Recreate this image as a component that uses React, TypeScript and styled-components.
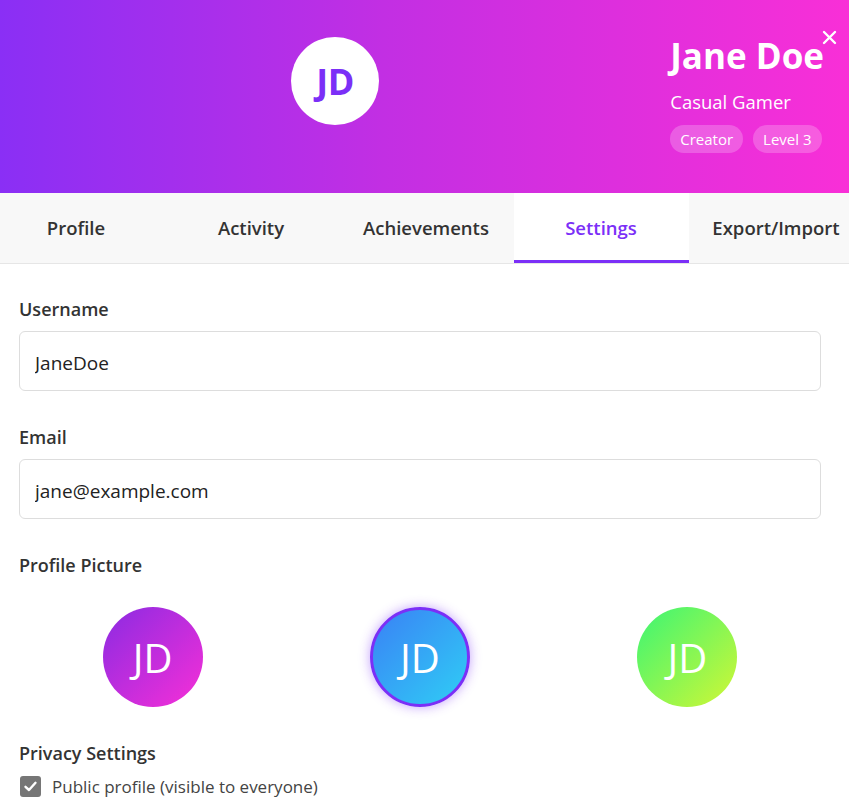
import React, { useState } from 'react'
import styled, { createGlobalStyle } from 'styled-components'

const GlobalStyle = createGlobalStyle`
  * { box-sizing: border-box; }
  html, body {
    margin: 0;
    padding: 0;
    background: #ffffff;
    font-family: "Open Sans", "Noto Sans", sans-serif;
    color: #333333;
    overflow: hidden;
  }
`

const avatarOptions = [
  { id: 'purple', from: '#8a2be2', to: '#f72fd7' },
  { id: 'blue', from: '#3a7ff5', to: '#2fd0f5' },
  { id: 'green', from: '#3af575', to: '#d2f734' },
]

const tabs = ['Profile', 'Activity', 'Achievements', 'Settings', 'Export/Import']

export default function App() {
  const [activeTab, setActiveTab] = useState('Settings')
  const [selected, setSelected] = useState('blue')
  const [isPublic, setIsPublic] = useState(true)

  return (
    <>
      <GlobalStyle />
      <Modal>
        <Header>
          <AvatarSlot>
            <HeaderAvatar>JD</HeaderAvatar>
          </AvatarSlot>
          <Info>
            <Name>Jane Doe</Name>
            <Role>Casual Gamer</Role>
            <Badges>
              <Badge>Creator</Badge>
              <Badge>Level 3</Badge>
            </Badges>
          </Info>
          <CloseButton aria-label="Close">
            <svg width="15" height="15" viewBox="0 0 15 15">
              <path d="M2 2 L13 13 M13 2 L2 13" stroke="#ffffff" strokeWidth="2.4" strokeLinecap="round" />
            </svg>
          </CloseButton>
        </Header>

        <TabBar>
          {tabs.map((t) => (
            <Tab key={t} $active={t === activeTab} onClick={() => setActiveTab(t)}>
              {t}
            </Tab>
          ))}
        </TabBar>

        <Content>
          <Field>
            <Label>Username</Label>
            <TextInput type="text" defaultValue="JaneDoe" />
          </Field>
          <Field>
            <Label>Email</Label>
            <TextInput type="email" defaultValue="jane@example.com" />
          </Field>
          <Field>
            <Label>Profile Picture</Label>
            <AvatarGrid>
              {avatarOptions.map((a) => (
                <AvatarChoice
                  key={a.id}
                  $from={a.from}
                  $to={a.to}
                  $selected={a.id === selected}
                  onClick={() => setSelected(a.id)}
                >
                  JD
                </AvatarChoice>
              ))}
            </AvatarGrid>
          </Field>
          <Field>
            <Label>Privacy Settings</Label>
            <CheckRow onClick={() => setIsPublic(!isPublic)}>
              <CheckBox $checked={isPublic}>
                {isPublic && (
                  <svg width="15" height="15" viewBox="0 0 15 15">
                    <path d="M2.5 7.8 L6 11 L12.5 3.8" stroke="#ffffff" strokeWidth="2.4" fill="none" strokeLinecap="round" strokeLinejoin="round" />
                  </svg>
                )}
              </CheckBox>
              <CheckText>Public profile (visible to everyone)</CheckText>
            </CheckRow>
          </Field>
        </Content>
      </Modal>
    </>
  )
}

const Modal = styled.div`
  width: 849px;
  min-height: 811px;
  background: #ffffff;
  display: flex;
  flex-direction: column;
`

const Header = styled.div`
  position: relative;
  height: 193px;
  display: grid;
  grid-template-columns: 1fr auto;
  align-items: start;
  padding: 35px 25px 0 0;
  background: linear-gradient(90deg, #8a2ff5 0%, #c22fe3 45%, #f92fd7 100%);
  color: #ffffff;
`

const AvatarSlot = styled.div`
  display: flex;
  justify-content: center;
  padding-top: 2px;
`

const HeaderAvatar = styled.div`
  width: 88px;
  height: 88px;
  border-radius: 50%;
  background: #ffffff;
  color: #7b2ff7;
  display: flex;
  align-items: center;
  justify-content: center;
  font-size: 36px;
  font-weight: 700;
  letter-spacing: -0.5px;
`

const Info = styled.div`
  display: flex;
  flex-direction: column;
  align-items: flex-start;
`

const Name = styled.h1`
  margin: 0;
  font-size: 35px;
  line-height: 42px;
  font-weight: 700;
`

const Role = styled.div`
  margin-top: 12px;
  font-size: 18.5px;
  line-height: 26px;
`

const Badges = styled.div`
  display: flex;
  gap: 10px;
  margin-top: 10px;
`

const Badge = styled.span`
  height: 28px;
  padding: 0 10px;
  border-radius: 14px;
  background: rgba(255, 255, 255, 0.22);
  font-size: 15px;
  line-height: 28px;
`

const CloseButton = styled.button`
  position: absolute;
  top: 28px;
  right: 11px;
  width: 18px;
  height: 18px;
  padding: 0;
  border: none;
  background: none;
  cursor: pointer;
  display: flex;
  align-items: center;
  justify-content: center;
`

const TabBar = styled.div`
  display: flex;
  height: 71px;
  background: #f8f8f8;
  border-bottom: 1px solid #e6e6e6;
  overflow: hidden;
`

const Tab = styled.button<{ $active?: boolean }>`
  flex: 0 0 175px;
  height: 70px;
  border: none;
  border-bottom: 3px solid ${(p) => (p.$active ? '#7b2ff7' : 'transparent')};
  background: ${(p) => (p.$active ? '#ffffff' : 'transparent')};
  color: ${(p) => (p.$active ? '#7b2ff7' : '#333333')};
  font-family: inherit;
  font-size: 18.5px;
  font-weight: 600;
  padding: 1px 0 0;
  cursor: pointer;

  &:first-child {
    margin-left: -11.5px;
  }
`

const Content = styled.div`
  padding: 33px 28px 0 19px;
  display: flex;
  flex-direction: column;
  gap: 34px;
`

const Field = styled.div`
  display: flex;
  flex-direction: column;
`

const Label = styled.label`
  font-size: 18px;
  line-height: 24px;
  font-weight: 600;
  color: #333333;
  margin-bottom: 10px;
`

const TextInput = styled.input`
  height: 60px;
  width: 100%;
  padding: 3px 15px 0;
  border: 1px solid #dddddd;
  border-radius: 6px;
  font-family: inherit;
  font-size: 19px;
  color: #222222;
  outline: none;
`

const AvatarGrid = styled.div`
  display: grid;
  grid-template-columns: repeat(3, 1fr);
  padding: 20px 0 0;
`

const AvatarChoice = styled.div<{ $from: string; $to: string; $selected?: boolean }>`
  justify-self: center;
  width: 100px;
  height: 100px;
  border-radius: 50%;
  border: 3px solid ${(p) => (p.$selected ? '#7b2ff7' : 'transparent')};
  background: linear-gradient(135deg, ${(p) => p.$from}, ${(p) => p.$to}) border-box;
  box-shadow: ${(p) => (p.$selected ? '0 0 12px rgba(123, 47, 247, 0.45)' : 'none')};
  color: #ffffff;
  font-size: 40px;
  font-weight: 400;
  display: flex;
  align-items: center;
  justify-content: center;
  cursor: pointer;
`

const CheckRow = styled.div`
  display: flex;
  align-items: center;
  gap: 11px;
  padding-left: 1px;
  cursor: pointer;
`

const CheckBox = styled.span<{ $checked?: boolean }>`
  width: 21px;
  height: 21px;
  border-radius: 3px;
  background: ${(p) => (p.$checked ? '#767676' : '#ffffff')};
  border: ${(p) => (p.$checked ? 'none' : '2px solid #767676')};
  display: flex;
  align-items: center;
  justify-content: center;
`

const CheckText = styled.span`
  font-size: 17px;
  color: #444444;
`
